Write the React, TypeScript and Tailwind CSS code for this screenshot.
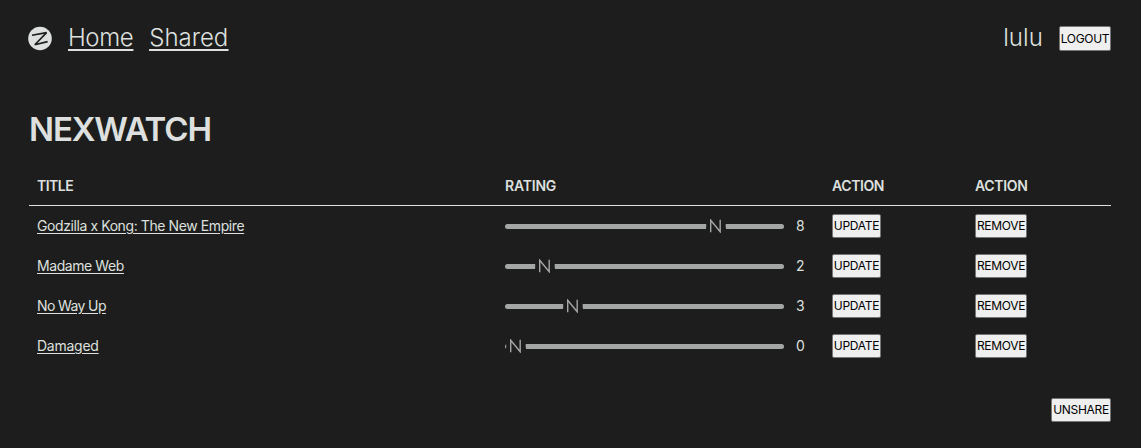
import type { ReactNode } from "react";

type Movie = { title: string; rating: number; tracking: string };

const movies: Movie[] = [
  { title: "Godzilla x Kong: The New Empire", rating: 8, tracking: "tracking-[-0.41px]" },
  { title: "Madame Web", rating: 2, tracking: "tracking-[-0.42px]" },
  { title: "No Way Up", rating: 3, tracking: "tracking-[-0.62px]" },
  { title: "Damaged", rating: 0, tracking: "tracking-[-0.25px]" },
];

function Button({ className, children }: { className: string; children: ReactNode }) {
  return (
    <button
      className={`flex shrink-0 items-center justify-center whitespace-nowrap rounded-[2px] border border-[#767676] bg-[#efefef] text-[12px] leading-none text-black ${className}`}
    >
      {children}
    </button>
  );
}

function Logo() {
  return (
    <svg viewBox="0 0 24 24" className="h-6 w-6 overflow-visible" aria-label="Home">
      <circle cx="12" cy="12.5" r="11.8" fill="#dde0df" />
      <path d="M4 9.2L18.6 6.6L6.8 18.8L19.6 15.6" fill="none" stroke="#1d1d1d" strokeWidth="1.6" strokeLinejoin="bevel" />
    </svg>
  );
}

function Slider({ value }: { value: number }) {
  const left = Math.round(1 + (Math.max(value, 1) - 1) * 28.57);
  return (
    <div className="relative h-5 w-[279px]">
      <div className="absolute inset-x-0 top-[8px] h-[5px] rounded-full bg-[#a3a6a5]" />
      <div
        className="absolute top-0 flex h-5 w-5 items-center justify-between bg-[#1d1d1d]"
        style={{ left }}
      >
        <span className="h-[4px] w-px bg-[#353736]" />
        <svg viewBox="0 0 12 14" className="h-[14px] w-3" fill="none" stroke="#a3a6a5" strokeWidth="1.4">
          <path d="M0.7 13.2V1.2L10.2 12.8V0.8" />
        </svg>
        <span className="h-[4px] w-px bg-[#454746]" />
      </div>
    </div>
  );
}

export default function App() {
  return (
    <div className="h-[448px] overflow-hidden bg-[#1d1d1d] pl-[29px] pr-[30px] font-['Inter','Liberation_Sans',sans-serif] text-[#dde0df]">
      <header className="-ml-[1px] flex h-[76px] items-center justify-between">
        <nav className="flex items-center text-2xl font-light underline decoration-2 underline-offset-[3px]">
          <Logo />
          <a className="ml-4 tracking-[-0.4px]">Home</a>
          <a className="ml-4 tracking-[0px]">Shared</a>
        </nav>
        <div className="flex items-center">
          <span className="mr-4 text-2xl font-light tracking-[0.1px]">lulu</span>
          <Button className="h-[25px] w-[52px] pt-px tracking-[-0.3px]">LOGOUT</Button>
        </div>
      </header>
      <main>
        <h1 className="mt-[29px] h-12 text-[33px] font-semibold leading-[48px] tracking-[-1.15px]">NEXWATCH</h1>
        <table className="mt-[13px] w-full table-fixed border-separate border-spacing-0 text-sm">
          <colgroup>
            <col className="w-[468px]" />
            <col className="w-[327px]" />
            <col className="w-[143px]" />
            <col />
          </colgroup>
          <thead>
            <tr className="h-10 text-left">
              <th className="border-b border-[#dde0df] px-2 py-0 font-semibold tracking-[-0.5px]">TITLE</th>
              <th className="border-b border-[#dde0df] px-2 py-0 font-semibold tracking-[-0.2px]">RATING</th>
              <th className="border-b border-[#dde0df] px-2 py-0 font-semibold tracking-[-0.4px]">ACTION</th>
              <th className="border-b border-[#dde0df] px-2 py-0 font-semibold tracking-[-0.3px]">ACTION</th>
            </tr>
          </thead>
          <tbody>
            {movies.map((movie) => (
              <tr key={movie.title} className="h-10">
                <td className="px-2 py-0">
                  <a className={`underline underline-offset-2 ${movie.tracking}`}>{movie.title}</a>
                </td>
                <td className="px-2 py-0">
                  <div className="flex items-center">
                    <Slider value={movie.rating} />
                    <span className="ml-3 tracking-[-0.5px]">{movie.rating}</span>
                  </div>
                </td>
                <td className="px-2 py-0"><Button className="h-6 w-[49px] tracking-[-0.3px]">UPDATE</Button></td>
                <td className="px-2 py-0"><Button className="h-6 w-[52px] tracking-[-0.3px]">REMOVE</Button></td>
              </tr>
            ))}
          </tbody>
        </table>
        <div className="mt-8 flex justify-end">
          <Button className="h-6 w-[60px] tracking-[-0.3px]">UNSHARE</Button>
        </div>
      </main>
    </div>
  );
}
